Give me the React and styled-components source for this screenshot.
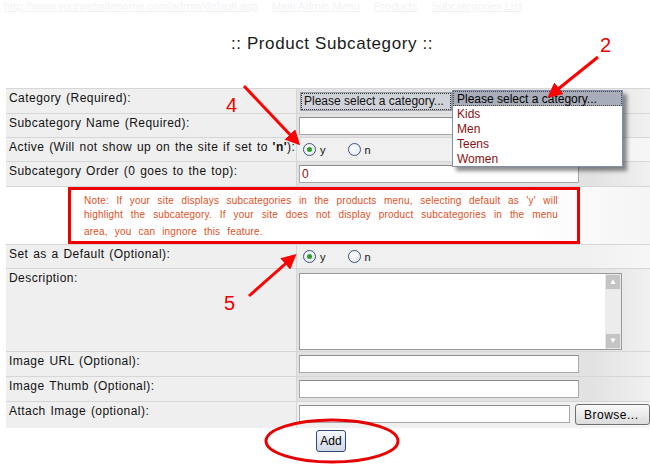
import React from 'react'
import styled, {createGlobalStyle} from 'styled-components'

const GlobalStyle = createGlobalStyle`
  html, body {
    margin: 0;
    padding: 0;
    background: #fff;
  }
  body {
    font-family: "Liberation Sans", Arial, sans-serif;
    width: 650px;
    height: 472px;
    overflow: hidden;
  }
`

const categories = ['Kids', 'Men', 'Teens', 'Women']

const App = () => {
  return (
    <Page>
      <GlobalStyle />
      <TopLinks>
        <a href="#">http://www.yourwebsitename.com/admin/default.asp</a>
        <a href="#">Main Admin Menu</a>
        <a href="#">Products</a>
        <a href="#">Subcategories List</a>
      </TopLinks>
      <Title>:: Product Subcategory ::</Title>

      <Form>
        <Label $h={24}>Category (Required):</Label>
        <Value $h={24}>
          <Select>Please select a category...</Select>
          <DropList>
            <DropItem $active>Please select a category...</DropItem>
            {categories.map((c) => (
              <DropItem key={c}>{c}</DropItem>
            ))}
          </DropList>
        </Value>

        <Label>Subcategory Name (Required):</Label>
        <Value>
          <TextInput $width={280} />
        </Value>

        <Label>Active (Will not show up on the site if set to <b>'n'</b>):</Label>
        <Value $light>
          <Radios>
            <RadioOption><Radio $checked />y</RadioOption>
            <RadioOption><Radio />n</RadioOption>
          </Radios>
        </Value>

        <Label $h={24}>Subcategory Order (0 goes to the top):</Label>
        <Value $h={24}>
          <TextInput $width={280} defaultValue="0" />
        </Value>

        <NoteRow>
          <NoteBox>
            <NoteLine $justify>Note: If your site displays subcategories in the products menu, selecting default as 'y' will</NoteLine>
            <NoteLine $justify>highlight the subcategory. If your site does not display product subcategories in the menu</NoteLine>
            <NoteLine $gap>area, you can ingnore this feature.</NoteLine>
          </NoteBox>
        </NoteRow>

        <Label>Set as a Default (Optional):</Label>
        <Value $light>
          <Radios>
            <RadioOption><Radio $checked />y</RadioOption>
            <RadioOption><Radio />n</RadioOption>
          </Radios>
        </Value>

        <Label $h={82}>Description:</Label>
        <Value $h={82}>
          <TextArea>
            <textarea />
            <ScrollBar>
              <ScrollButton>▲</ScrollButton>
              <ScrollButton>▼</ScrollButton>
            </ScrollBar>
          </TextArea>
        </Value>

        <Label $h={24}>Image URL (Optional):</Label>
        <Value $h={24}>
          <TextInput $width={280} />
        </Value>

        <Label $h={24}>Image Thumb (Optional):</Label>
        <Value $h={24}>
          <TextInput $width={280} />
        </Value>

        <Label $h={26}>Attach Image (optional):</Label>
        <Value $h={26} $light>
          <FileRow>
            <TextInput $width={271} />
            <BrowseButton>Browse...</BrowseButton>
          </FileRow>
        </Value>
      </Form>

      <Actions>
        <AddButton>Add</AddButton>
      </Actions>

      <Annotations width="650" height="472" viewBox="0 0 650 472">
        <defs>
          <marker id="head" markerWidth="5" markerHeight="5" refX="3" refY="2.5" orient="auto">
            <path d="M0,0 L5,2.5 L0,5 z" fill="#f00" />
          </marker>
        </defs>
        <Num x="226" y="112">4</Num>
        <line x1="244" y1="86" x2="296" y2="141" stroke="#f00" strokeWidth="3" markerEnd="url(#head)" />
        <Num x="600" y="52">2</Num>
        <line x1="598" y1="57" x2="552" y2="94" stroke="#f00" strokeWidth="3" markerEnd="url(#head)" />
        <Num x="224" y="310">5</Num>
        <line x1="249" y1="296" x2="292" y2="258" stroke="#f00" strokeWidth="3" markerEnd="url(#head)" />
        <ellipse cx="332" cy="441" rx="66" ry="21" fill="none" stroke="#e80000" strokeWidth="3" />
      </Annotations>
    </Page>
  )
}

const Page = styled.div`
  position: relative;
  width: 650px;
  height: 472px;
  overflow: hidden;
`

const TopLinks = styled.div`
  height: 14px;
  padding-left: 4px;
  display: flex;
  gap: 14px;
  font-size: 11px;
  white-space: nowrap;
  a{
    color: #f1f3f7;
  }
`

const Title = styled.div`
  margin-top: 20px;
  padding-left: 14px;
  text-align: center;
  font-size: 17px;
  letter-spacing: 0.6px;
  color: #1a1a1a;
  height: 54px;
`

const Form = styled.div`
  display: grid;
  grid-template-columns: 290px 360px;
  column-gap: 1px;
  row-gap: 1px;
  margin-left: 6px;
  background: #d6d6d6;
  padding-top: 1px;
  font-size: 12px;
  letter-spacing: 0.45px;
  word-spacing: 1px;
  color: #111;
`

const Label = styled.div`
  background: #efefef;
  height: ${(p) => p.$h || 23}px;
  padding: 2px 0 0 3px;
  box-sizing: border-box;
  white-space: nowrap;
  b{
    font-weight: bold;
  }
`

const Value = styled.div`
  position: relative;
  height: ${(p) => p.$h || 23}px;
  background: ${(p) =>
    p.$light
      ? 'linear-gradient(90deg, #f0f0f0 0%, #f0f0f0 80%, #f7f7f7 100%)'
      : 'linear-gradient(90deg, #e2e2e2 0%, #e2e2e2 82%, #f2f2f2 100%)'};
  box-sizing: border-box;
  padding: 3px 0 0 2px;
  letter-spacing: 0;
  word-spacing: 0;
`

const Select = styled.div`
  width: 146px;
  height: 15px;
  margin: 1px 0 0 2px;
  padding-left: 2px;
  border: 1px dotted #333;
  outline: 1px solid #9aa0aa;
  background: #cfd2d8;
  font-size: 12px;
  line-height: 15px;
  white-space: nowrap;
  overflow: hidden;
`

const DropList = styled.div`
  position: absolute;
  left: 155px;
  top: 1px;
  width: 169px;
  background: #fff;
  border: 1px solid #8090a8;
  box-shadow: 4px 4px 4px rgba(0, 0, 0, 0.45);
  z-index: 2;
`

const DropItem = styled.div`
  height: 15px;
  line-height: 14px;
  padding-left: 3px;
  font-size: 12px;
  color: ${(p) => (p.$active ? '#000' : '#8b1010')};
  background: ${(p) => (p.$active ? '#a9adb9' : 'transparent')};
  border: ${(p) => (p.$active ? '1px dotted #444' : '1px solid transparent')};
  box-sizing: border-box;
  white-space: nowrap;
`

const TextInput = styled.input`
  display: block;
  width: ${(p) => p.$width}px;
  height: 18px;
  box-sizing: border-box;
  border: 1px solid #a8a8a8;
  border-top-color: #8c8c8c;
  background: #fff;
  padding: 1px 2px;
  font-family: "Liberation Sans", Arial, sans-serif;
  font-size: 12px;
  color: #8b1010;
  outline: none;
`

const Radios = styled.div`
  display: flex;
  gap: 22px;
  padding: 2px 0 0 4px;
`

const RadioOption = styled.label`
  display: flex;
  align-items: center;
  gap: 4px;
  font-size: 11px;
`

const Radio = styled.span`
  position: relative;
  width: 11px;
  height: 11px;
  border: 1px solid #3a5578;
  border-radius: 50%;
  background: radial-gradient(circle at 40% 40%, #ffffff, #dfe4ea);
  &::after{
    content: '';
    display: ${(p) => (p.$checked ? 'block' : 'none')};
    position: absolute;
    left: 3px;
    top: 3px;
    width: 5px;
    height: 5px;
    border-radius: 50%;
    background: #2aa02a;
  }
`

const NoteRow = styled.div`
  grid-column: 1 / span 2;
  height: 57px;
  background: linear-gradient(90deg, #fff 0%, #fff 80%, #f4f4f4 100%);
  padding-left: 62px;
  box-sizing: border-box;
`

const NoteBox = styled.div`
  width: 512px;
  height: 57px;
  box-sizing: border-box;
  border: 3px solid #ee0000;
  padding: 4px 19px 0 13px;
  font-size: 10px;
  letter-spacing: 0.2px;
  word-spacing: 1px;
  color: #e0501e;
`

const NoteLine = styled.div`
  line-height: 14px;
  margin-top: ${(p) => (p.$gap ? '3px' : '0')};
  word-spacing: ${(p) => (p.$justify ? '1px' : '4px')};
  text-align: ${(p) => (p.$justify ? 'justify' : 'left')};
  text-align-last: ${(p) => (p.$justify ? 'justify' : 'left')};
  white-space: nowrap;
`

const TextArea = styled.div`
  display: flex;
  width: 323px;
  height: 77px;
  margin-top: 1px;
  box-sizing: border-box;
  border: 1px solid #999;
  background: #fff;
  textarea{
    flex: 1;
    border: none;
    resize: none;
    outline: none;
  }
`

const ScrollBar = styled.div`
  width: 16px;
  display: flex;
  flex-direction: column;
  justify-content: space-between;
  background: #ececec;
`

const ScrollButton = styled.div`
  width: 16px;
  height: 16px;
  background: #c4c4c4;
  border: 1px solid #e8e8e8;
  box-sizing: border-box;
  color: #fff;
  font-size: 8px;
  line-height: 14px;
  text-align: center;
`

const FileRow = styled.div`
  display: flex;
  gap: 5px;
`

const BrowseButton = styled.button`
  height: 21px;
  margin-top: -1px;
  padding: 0 10px 0 8px;
  border: 1px solid #707070;
  border-radius: 3px;
  background: linear-gradient(#fafafa, #dcdcdc);
  font-family: "Liberation Sans", Arial, sans-serif;
  font-size: 12px;
  letter-spacing: 0.5px;
  color: #000;
  white-space: nowrap;
`

const Actions = styled.div`
  display: flex;
  justify-content: center;
  padding: 2px 0 0 12px;
`

const AddButton = styled.button`
  height: 22px;
  padding: 0 3px;
  border: 1px solid #2b4a7a;
  border-radius: 3px;
  background: linear-gradient(#f6f8fc, #d0d8e6);
  font-family: "Liberation Sans", Arial, sans-serif;
  font-size: 12px;
  color: #000;
`

const Annotations = styled.svg`
  position: absolute;
  left: 0;
  top: 0;
  pointer-events: none;
  z-index: 5;
`

const Num = styled.text`
  font-family: "Liberation Sans", Arial, sans-serif;
  font-size: 20px;
  fill: #e00;
`

export default App
